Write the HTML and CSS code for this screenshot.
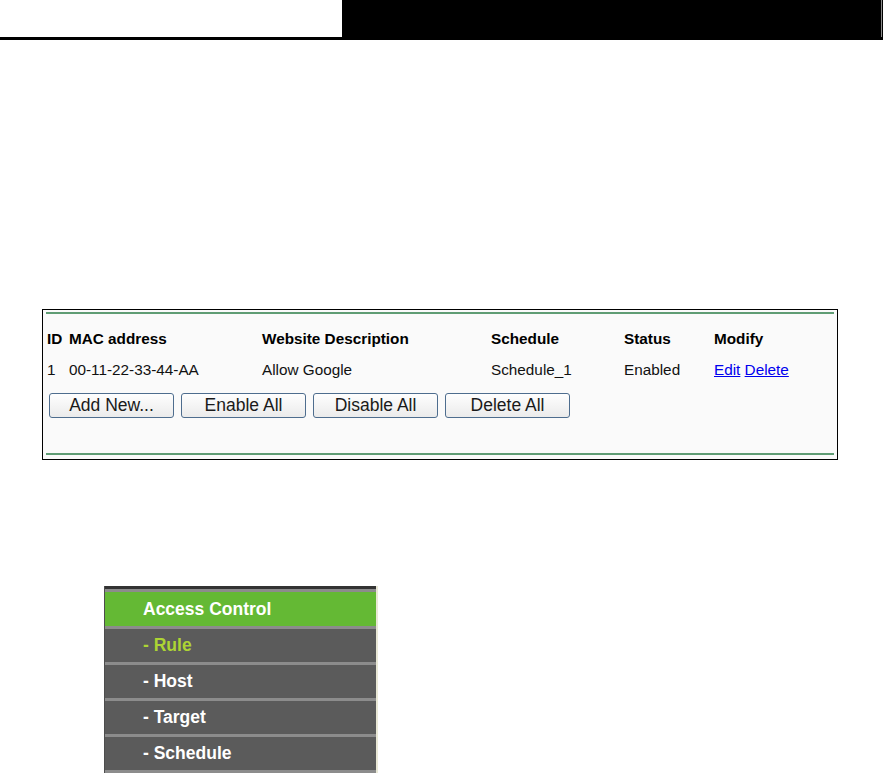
FILE: index.html
```html
<!DOCTYPE html>
<html>
<head>
<meta charset="utf-8">
<link rel="stylesheet" href="styles.css">
</head>
<body>
<div class="header">
  <div class="header-left"></div>
  <div class="header-right"><span class="header-edge"></span></div>
</div>

<div class="panel">
  <div class="panel-inner">
    <div class="grid head">
      <div>ID</div><div>MAC address</div><div>Website Description</div><div>Schedule</div><div>Status</div><div>Modify</div>
    </div>
    <div class="grid data">
      <div>1</div><div>00-11-22-33-44-AA</div><div>Allow Google</div><div>Schedule_1</div><div>Enabled</div><div><a href="#">Edit</a> <a href="#">Delete</a></div>
    </div>
    <div class="buttons">
      <button class="btn">Add New...</button>
      <button class="btn">Enable All</button>
      <button class="btn">Disable All</button>
      <button class="btn">Delete All</button>
    </div>
  </div>
</div>

<div class="menu">
  <div class="menu-top"></div>
  <div class="menu-item active">Access Control</div>
  <div class="menu-item sub current">- Rule</div>
  <div class="menu-item sub">- Host</div>
  <div class="menu-item sub">- Target</div>
  <div class="menu-item sub">- Schedule</div>
</div>
</body>
</html>
```

FILE: styles.css
```css
html, body {
  margin: 0;
  padding: 0;
  background: #ffffff;
}
body {
  font-family: "Liberation Sans", Arial, sans-serif;
  width: 883px;
  height: 774px;
  overflow: hidden;
}
.header {
  display: flex;
  height: 40px;
}
.header-left {
  width: 342px;
  height: 37px;
  border-bottom: 3px solid #000;
  background: #fff;
}
.header-right {
  flex: 1;
  background: #000;
  display: flex;
  justify-content: flex-end;
}
.header-edge {
  width: 1px;
  height: 37px;
  background: #8a8a8a;
  margin-right: 1px;
}
.panel {
  margin: 269px 0 0 42px;
  width: 788px;
  border: 1px solid #000;
  padding: 2px 3px 4px 3px;
  background: #fafafa;
}
.panel-inner {
  border-top: 2px solid #5f9c74;
  border-bottom: 2px solid #5f9c74;
  height: 139px;
  box-sizing: content-box;
  font-size: 15.3px;
  color: #111;
}
.grid {
  display: grid;
  grid-template-columns: 22px 193px 229px 133px 90px 1fr;
  padding-left: 1px;
  height: 31px;
  line-height: 31px;
  white-space: nowrap;
}
.head {
  margin-top: 9px;
  font-weight: bold;
  color: #000;
}
.data a {
  color: #0000ee;
  text-decoration: underline;
}
.buttons {
  display: flex;
  gap: 7px;
  margin-top: 8px;
  padding-left: 3px;
}
.btn {
  width: 125px;
  height: 25px;
  padding: 0;
  border: 1px solid #4e6d8e;
  border-radius: 3px;
  background: linear-gradient(#fefefe, #ebebeb);
  font-family: "Liberation Sans", Arial, sans-serif;
  font-size: 17.5px;
  line-height: 23px;
  color: #1a1a1a;
  text-align: center;
}
.menu {
  margin: 126px 0 0 104px;
  width: 271px;
  border-left: 1px solid #4d4d4d;
  border-right: 2px solid #e9e8d6;
}
.menu-top {
  height: 3px;
  background: #333333;
  border-bottom: 3px solid #8c8c8c;
}
.menu-item {
  height: 33px;
  line-height: 33px;
  padding-left: 38px;
  background: #5b5b5b;
  border-bottom: 3px solid #8c8c8c;
  color: #ffffff;
  font-weight: bold;
  font-size: 17.5px;
}
.menu-item.active {
  height: 34px;
  line-height: 34px;
  background: #64b934;
}
.menu-item.current {
  color: #add434;
}
```
